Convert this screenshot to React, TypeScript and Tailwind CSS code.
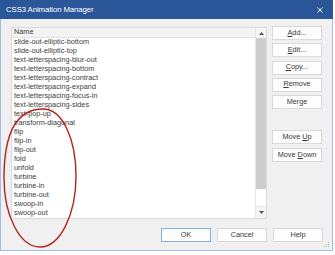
import React from 'react';

const items = [
  'slide-out-elliptic-bottom',
  'slide-out-elliptic-top',
  'text-letterspacing-blur-out',
  'text-letterspacing-bottom',
  'text-letterspacing-contract',
  'text-letterspacing-expand',
  'text-letterspacing-focus-in',
  'text-letterspacing-sides',
  'text-pop-up',
  'transform-diagonal',
  'flip',
  'flip-in',
  'flip-out',
  'fold',
  'unfold',
  'turbine',
  'turbine-in',
  'turbine-out',
  'swoop-in',
  'swoop-out',
];

function Btn({ children, primary }: { children: React.ReactNode; primary?: boolean }) {
  return (
    <div
      className={
        'w-[50px] h-[14px] flex items-center justify-center text-[7.3px] text-[#3a3a3a] bg-[#fdfdfd] border ' +
        (primary ? 'border-[#7fb0e3]' : 'border-[#d9d9d9]')
      }
    >
      <span className="whitespace-pre">{children}</span>
    </div>
  );
}

export default function App() {
  return (
    <div
      className="relative w-[335px] h-[255px] bg-white"
      style={{ fontFamily: '"Liberation Sans", Arial, sans-serif' }}
    >
      <div className="w-[333px] h-[251px] flex flex-col">
        <div className="h-[19px] bg-[#2b579a] flex items-center justify-between pl-[6px] pr-[10px] text-white">
          <span className="text-[7.8px] tracking-[-0.1px]">CSS3 Animation Manager</span>
          <svg width="6" height="6" viewBox="0 0 6 6">
            <path d="M0.5 0.5L5.5 5.5M5.5 0.5L0.5 5.5" stroke="#fff" strokeWidth="1" />
          </svg>
        </div>

        <div className="flex-1 bg-[#f0f0f0] border-x border-b border-[#9cc0e7] flex flex-col pl-[10px] relative">
          <div className="flex gap-[5px] pt-[8px]">
            <div className="w-[256px] h-[192px] border border-[#dadada] bg-white flex">
              <div className="flex-1 flex flex-col">
                <div className="h-[10px] bg-[#f3f3f3] border-b border-[#e2e2e2] flex items-center pl-[2px] text-[7.3px] text-[#3a3a3a]">
                  Name
                </div>
                {items.map((it) => (
                  <div key={it} className="h-[9px] flex items-center pl-[2px] text-[7.3px] text-[#3d3d3d]">
                    {it}
                  </div>
                ))}
              </div>
              <div className="w-[11px] flex flex-col border-l border-[#e6e6e6]">
                <div className="h-[10px] bg-[#f5f5f5] flex items-center justify-center">
                  <svg width="5" height="3" viewBox="0 0 5 3">
                    <path d="M0 3L2.5 0L5 3Z" fill="#555" />
                  </svg>
                </div>
                <div className="h-[151px] bg-[#cdcdcd]" />
                <div className="flex-1 bg-white" />
                <div className="h-[12px] bg-[#f5f5f5] border-t border-[#e6e6e6] flex items-center justify-center">
                  <svg width="5" height="3" viewBox="0 0 5 3">
                    <path d="M0 0L2.5 3L5 0Z" fill="#555" />
                  </svg>
                </div>
              </div>
            </div>

            <div className="flex flex-col mt-[-1px]">
              <div className="flex flex-col gap-[3.25px]">
                <Btn><span className="underline">A</span>dd...</Btn>
                <Btn><span className="underline">E</span>dit...</Btn>
                <Btn><span className="underline">C</span>opy...</Btn>
                <Btn><span className="underline">R</span>emove</Btn>
                <Btn>Merge</Btn>
              </div>
              <div className="flex flex-col gap-[4px] mt-[21px]">
                <Btn>{'Move '}<span className="underline">U</span>p</Btn>
                <Btn>{'Move '}<span className="underline">D</span>own</Btn>
              </div>
            </div>
          </div>

          <div className="flex justify-end gap-[6px] pr-[9px] mt-[9px]">
            <Btn primary>OK</Btn>
            <Btn>Cancel</Btn>
            <Btn>Help</Btn>
          </div>

          <svg className="absolute right-[2px] bottom-[2px]" width="6" height="6" viewBox="0 0 6 6">
            <rect x="4" y="0" width="1" height="1" fill="#b5b5b5" />
            <rect x="2" y="2" width="1" height="1" fill="#b5b5b5" />
            <rect x="4" y="2" width="1" height="1" fill="#b5b5b5" />
            <rect x="0" y="4" width="1" height="1" fill="#b5b5b5" />
            <rect x="2" y="4" width="1" height="1" fill="#b5b5b5" />
            <rect x="4" y="4" width="1" height="1" fill="#b5b5b5" />
          </svg>
        </div>
      </div>

      <svg className="absolute inset-0 pointer-events-none" width="335" height="255" viewBox="0 0 335 255">
        <path
          d="M43 109 C63 109 76 140 76 176 C76 215 60 247 40 247 C20 247 4 216 4 178 C4 130 18 109 43 109 Z"
          fill="none"
          stroke="#b2231b"
          strokeWidth="1.4"
        />
      </svg>
    </div>
  );
}
